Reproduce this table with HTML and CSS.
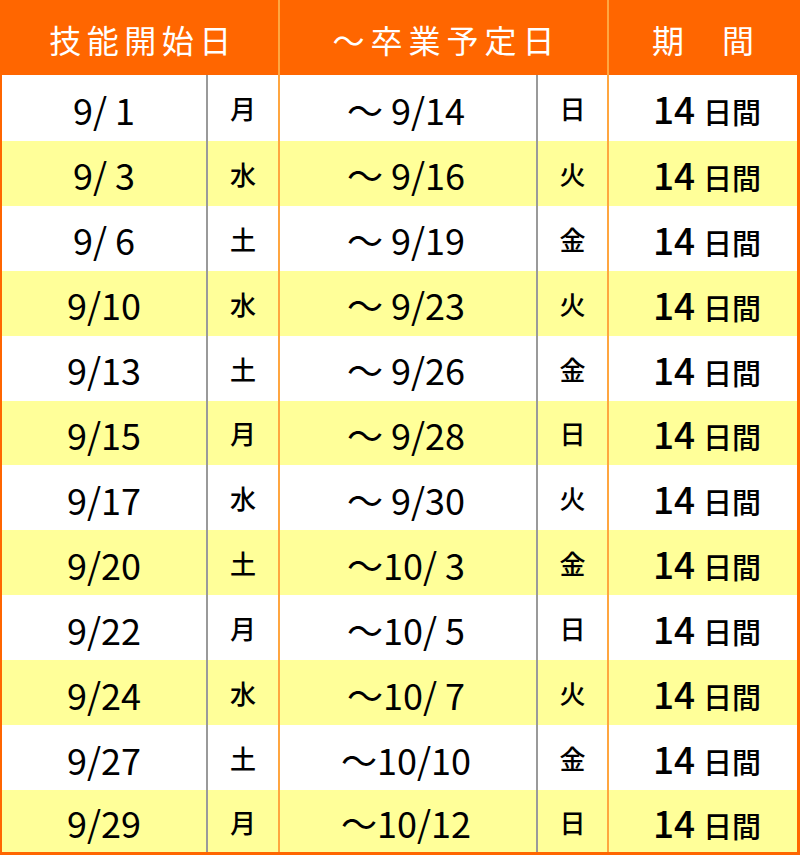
FILE: index.html
```html
<!DOCTYPE html>
<html lang="ja">
<head>
<meta charset="utf-8">
<title>日程表</title>
<link rel="stylesheet" href="styles.css">
</head>
<body>
<div class="schedule">
  <div class="head">
    <div class="hcell h1">技能開始日</div>
    <div class="hcell h2">～卒業予定日</div>
    <div class="hcell h3">期　間</div>
  </div>
  <div class="row"><div class="c date">9/ 1</div><div class="c wd">月</div><div class="c end">～ 9/14</div><div class="c wd2">日</div><div class="c per"><span class="line"><span class="num">14</span><span class="unit">日間</span></span></div></div>
  <div class="row alt"><div class="c date">9/ 3</div><div class="c wd">水</div><div class="c end">～ 9/16</div><div class="c wd2">火</div><div class="c per"><span class="line"><span class="num">14</span><span class="unit">日間</span></span></div></div>
  <div class="row"><div class="c date">9/ 6</div><div class="c wd">土</div><div class="c end">～ 9/19</div><div class="c wd2">金</div><div class="c per"><span class="line"><span class="num">14</span><span class="unit">日間</span></span></div></div>
  <div class="row alt"><div class="c date">9/10</div><div class="c wd">水</div><div class="c end">～ 9/23</div><div class="c wd2">火</div><div class="c per"><span class="line"><span class="num">14</span><span class="unit">日間</span></span></div></div>
  <div class="row"><div class="c date">9/13</div><div class="c wd">土</div><div class="c end">～ 9/26</div><div class="c wd2">金</div><div class="c per"><span class="line"><span class="num">14</span><span class="unit">日間</span></span></div></div>
  <div class="row alt"><div class="c date">9/15</div><div class="c wd">月</div><div class="c end">～ 9/28</div><div class="c wd2">日</div><div class="c per"><span class="line"><span class="num">14</span><span class="unit">日間</span></span></div></div>
  <div class="row"><div class="c date">9/17</div><div class="c wd">水</div><div class="c end">～ 9/30</div><div class="c wd2">火</div><div class="c per"><span class="line"><span class="num">14</span><span class="unit">日間</span></span></div></div>
  <div class="row alt"><div class="c date">9/20</div><div class="c wd">土</div><div class="c end">～10/ 3</div><div class="c wd2">金</div><div class="c per"><span class="line"><span class="num">14</span><span class="unit">日間</span></span></div></div>
  <div class="row"><div class="c date">9/22</div><div class="c wd">月</div><div class="c end">～10/ 5</div><div class="c wd2">日</div><div class="c per"><span class="line"><span class="num">14</span><span class="unit">日間</span></span></div></div>
  <div class="row alt"><div class="c date">9/24</div><div class="c wd">水</div><div class="c end">～10/ 7</div><div class="c wd2">火</div><div class="c per"><span class="line"><span class="num">14</span><span class="unit">日間</span></span></div></div>
  <div class="row"><div class="c date">9/27</div><div class="c wd">土</div><div class="c end">～10/10</div><div class="c wd2">金</div><div class="c per"><span class="line"><span class="num">14</span><span class="unit">日間</span></span></div></div>
  <div class="row alt"><div class="c date">9/29</div><div class="c wd">月</div><div class="c end">～10/12</div><div class="c wd2">日</div><div class="c per"><span class="line"><span class="num">14</span><span class="unit">日間</span></span></div></div>
</div>
</body>
</html>
```
FILE: styles.css
```css
html, body {
  margin: 0;
  padding: 0;
  background: #ffffff;
}
body {
  font-family: "Noto Sans CJK JP", "Noto Sans", sans-serif;
  color: #000;
}
.schedule {
  width: 800px;
  height: 855px;
  box-sizing: border-box;
  border-left: 2px solid #ff6600;
  border-right: 3px solid #ff6600;
  border-bottom: 3px solid #ff6600;
  display: flex;
  flex-direction: column;
}
.head {
  height: 75px;
  background: #ff6600;
  display: grid;
  grid-template-columns: 276px 329px 190px;
  color: #fff;
  font-size: 32px;
}
.hcell {
  display: flex;
  align-items: center;
  justify-content: center;
  padding-top: 4px;
  box-sizing: border-box;
  white-space: pre;
}
.h1 { letter-spacing: 5.5px; padding-left: 6px; }
.h2 { letter-spacing: 6px; padding-left: 6px; border-left: 2px solid #ffa640; }
.h3 { letter-spacing: 3px; padding-left: 3px; border-left: 2px solid #ffa640; }
.row {
  height: 65px;
  display: grid;
  grid-template-columns: 204px 72px 258px 71px 190px;
  background: #fff;
}
.row:nth-child(2) { height: 66px; }
.row:last-child { height: 62px; }
.row.alt { background: #ffff99; }
.c {
  display: flex;
  align-items: center;
  justify-content: center;
  box-sizing: border-box;
  white-space: pre;
}
.date, .end { font-size: 36px; }
.date { padding-top: 2px; }
.end { border-left: 2px solid #ffa640; padding-top: 2px; padding-right: 4px; }
.wd, .wd2 { font-size: 26px; font-weight: 500; border-left: 2px solid #9a9a9a; }
.per { border-left: 2px solid #ffa640; padding-top: 2px; padding-left: 8px; }
.line { line-height: 1; }
.num { font-size: 37px; font-weight: 500; margin-right: 8px; }
.unit { font-size: 29px; font-weight: 500; }
```
